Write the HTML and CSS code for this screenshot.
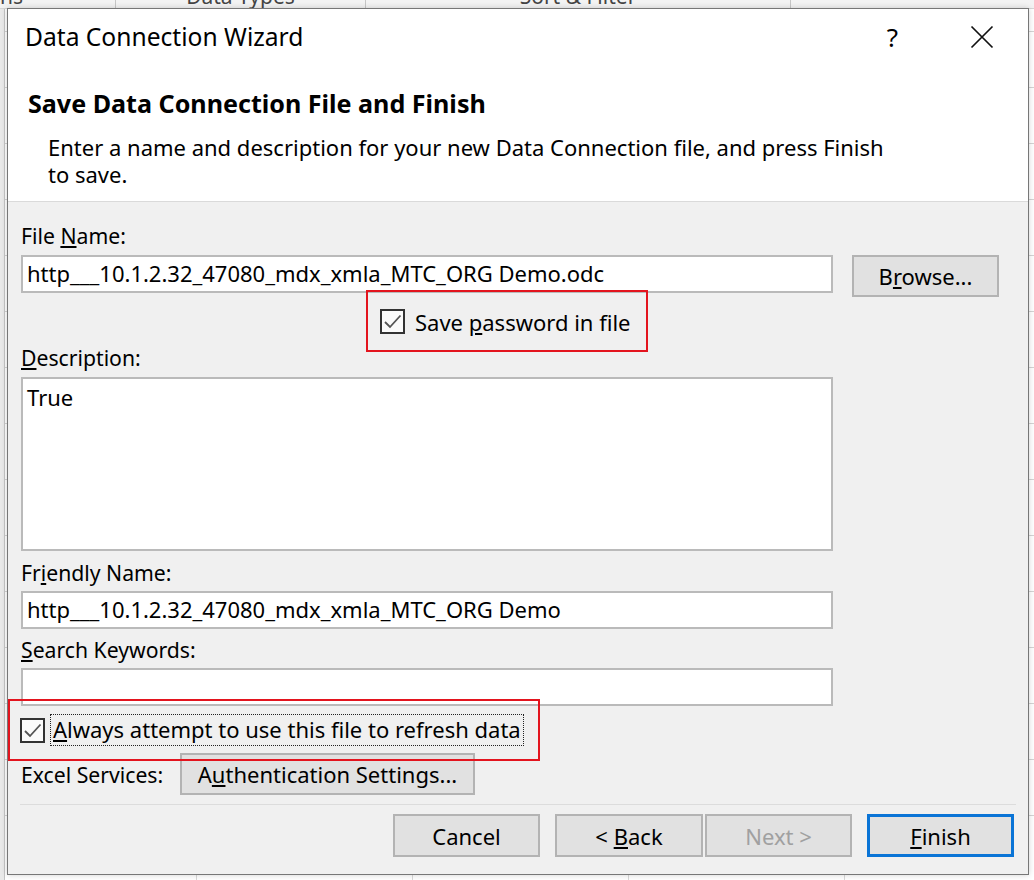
FILE: index.html
```html
<!DOCTYPE html>
<html lang="en">
<head>
<meta charset="utf-8">
<title>Data Connection Wizard</title>
<link rel="stylesheet" href="styles.css">
</head>
<body>
<div class="desk">
  <div class="ribbon">
    <div class="grp g1"><span>ns</span></div>
    <div class="grp g2"><span>Data Types</span></div>
    <div class="grp g3"><span>Sort &amp; Filter</span></div>
    <div class="grp g4"></div>
  </div>
  <div class="sheet"></div>

  <div class="dialog">
    <header class="head">
      <div class="titlebar">
        <span class="title">Data Connection Wizard</span>
        <span class="help">?</span>
        <span class="close">
          <svg width="24" height="24" viewBox="0 0 24 24"><path d="M1.5 1.5 L22.5 22.5 M22.5 1.5 L1.5 22.5" stroke="#111" stroke-width="1.7" fill="none"/></svg>
        </span>
      </div>
      <h1 class="heading">Save Data Connection File and Finish</h1>
      <p class="desc">Enter a name and description for your new Data Connection file, and press Finish<br>to save.</p>
    </header>

    <main class="body">
      <div class="label first">File <u>N</u>ame:</div>
      <div class="filerow">
        <div class="input">http___10.1.2.32_47080_mdx_xmla_MTC_ORG Demo.odc</div>
        <div class="btn browse"><span>B<u>r</u>owse...</span></div>
      </div>

      <div class="check c1">
        <svg class="box" width="25" height="25" viewBox="0 0 25 25"><rect x="1" y="1" width="23" height="23" fill="#fbfbfb" stroke="#333" stroke-width="2"/><path d="M5 13 L10 18 L20.5 6.5" stroke="#555" stroke-width="1.8" fill="none"/></svg>
        <span class="ctext">Save <u>p</u>assword in file</span>
      </div>

      <div class="label l2"><u>D</u>escription:</div>
      <div class="input area">True</div>

      <div class="label l3">Fr<u>i</u>endly Name:</div>
      <div class="input single">http___10.1.2.32_47080_mdx_xmla_MTC_ORG Demo</div>

      <div class="label l4"><u>S</u>earch Keywords:</div>
      <div class="input single"></div>

      <div class="check c2">
        <svg class="box" width="25" height="25" viewBox="0 0 25 25"><rect x="1" y="1" width="23" height="23" fill="#fbfbfb" stroke="#333" stroke-width="2"/><path d="M5 13 L10 18 L20.5 6.5" stroke="#555" stroke-width="1.8" fill="none"/></svg>
        <span class="ctext focus"><u>A</u>lways attempt to use this file to refresh data</span>
      </div>

      <div class="services">
        <span class="slabel">Excel Services:</span>
        <div class="btn auth"><span>A<u>u</u>thentication Settings...</span></div>
      </div>

      <div class="sep"></div>

      <div class="actions">
        <div class="btn act cancel"><span>Cancel</span></div>
        <div class="btn act back"><span>&lt; <u>B</u>ack</span></div>
        <div class="btn act next disabled"><span>Next &gt;</span></div>
        <div class="btn act finish"><span><u>F</u>inish</span></div>
      </div>
    </main>
  </div>

  <div class="mark m1"></div>
  <div class="mark m2"></div>
</div>
</body>
</html>
```

FILE: styles.css
```css
* { box-sizing: border-box; }

html, body {
  margin: 0;
  padding: 0;
}

body {
  width: 1034px;
  height: 880px;
  overflow: hidden;
  font-family: "Noto Sans", "Open Sans", sans-serif;
  color: #000;
}

.desk {
  position: relative;
  width: 1034px;
  height: 880px;
  background: #ffffff;
  overflow: hidden;
}

/* Excel window behind the dialog */
.ribbon {
  display: flex;
  height: 9px;
  background: #f3f3f3;
  border-bottom: 1px solid #d6d6d6;
  overflow: hidden;
}

.grp {
  height: 9px;
  border-right: 1px solid #c6c6c6;
  text-align: center;
  font-size: 21px;
  line-height: 22px;
  color: #444;
}

.grp span {
  display: block;
  margin-top: -15px;
}

.g1 { width: 116px; text-align: left; }
.g2 { width: 250px; }
.g3 { width: 425px; }
.g4 { flex: 1; border-right: none; }

.sheet {
  height: 871px;
  background-color: #ffffff;
  background-image:
    linear-gradient(to right, #e9e9e9 0, #e9e9e9 4px, #c4c4c4 4px, #c4c4c4 5px, transparent 5px),
    repeating-linear-gradient(to right, transparent 0, transparent 215px, #d9d9d9 215px, #d9d9d9 216px),
    repeating-linear-gradient(to bottom, transparent 0, transparent 55px, #d4d4d4 55px, #d4d4d4 56px);
  background-position: 0 0, -19px 0, 0 -33px;
}

/* dialog window */
.dialog {
  position: absolute;
  left: 7px;
  top: 8px;
  width: 1022px;
  height: 867px;
  border: 1px solid #777;
  background: #f0f0f0;
  display: flex;
  flex-direction: column;
  box-shadow: 0 0 6px rgba(0, 0, 0, 0.18);
}

.head {
  height: 193px;
  background: #fff;
  border-bottom: 1px solid #dadada;
  flex: none;
}

.titlebar {
  height: 56px;
  display: flex;
  align-items: center;
  padding-left: 17px;
}

.title {
  flex: 1;
  font-size: 24.6px;
  line-height: 28px;
  white-space: nowrap;
}

.help {
  font-size: 26px;
  line-height: 28px;
  margin-right: 72px;
}

.close {
  display: flex;
  width: 24px;
  height: 24px;
  margin-right: 34px;
}

.heading {
  margin: 22px 0 0 20px;
  font-size: 25.1px;
  line-height: 32px;
  font-weight: 700;
}

.desc {
  margin: 15px 0 0 40px;
  font-size: 22px;
  line-height: 27px;
  white-space: nowrap;
}

.body {
  flex: 1;
  display: flex;
  flex-direction: column;
  padding: 22px 14px 0 13px;
  font-size: 22px;
}

.label {
  height: 24px;
  line-height: 24px;
  white-space: nowrap;
  font-size: 21.2px;
}

.l2 { margin-top: 12px; }
.l3 { margin-top: 10px; }
.l4 { margin-top: 9px; }

.input {
  width: 812px;
  height: 38px;
  background: #fff;
  border: 2px solid #bababa;
  padding: 0 4px;
  line-height: 33px;
  white-space: nowrap;
  overflow: hidden;
}

.single { margin-top: 6px; }

.area {
  margin-top: 7px;
  height: 174px;
  line-height: 24px;
  padding-top: 6px;
}

.filerow {
  display: flex;
  gap: 19px;
  margin-top: 7px;
  height: 42px;
}

.btn {
  display: flex;
  align-items: center;
  justify-content: center;
  background: #e1e1e1;
  border: 2px solid #b3b3b3;
  white-space: nowrap;
}

.browse {
  width: 147px;
  height: 42px;
}

.check {
  display: flex;
  align-items: center;
  white-space: nowrap;
}

.box { flex: none; }

.c1 {
  margin-top: 12px;
  height: 25px;
  padding-left: 359px;
  gap: 10px;
}

.c2 {
  margin-top: 8px;
  height: 32px;
  margin-left: -1px;
  gap: 5px;
}

.focus {
  border: 1px dotted #222;
  height: 32px;
  line-height: 29px;
  padding: 0 2px 0 2px;
}

.services {
  display: flex;
  align-items: center;
  gap: 19px;
  margin-top: 7px;
  height: 42px;
}

.slabel {
  width: 140px;
  white-space: nowrap;
  font-size: 21.2px;
}

.auth {
  width: 295px;
  height: 42px;
}

.sep {
  margin: 9px -2px 0 -1px;
  height: 1px;
  background: #dcdcdc;
}

.actions {
  display: flex;
  justify-content: flex-end;
  margin-top: 9px;
  height: 43px;
}

.act {
  width: 147px;
  height: 43px;
}

.back { width: 148px; margin-left: 15px; }
.next { margin-left: 2px; }
.finish {
  margin-left: 15px;
  border: 2px solid #0a74d6;
  box-shadow: inset 0 0 0 1px #0a74d6;
}

.disabled { color: #a0a0a0; }

/* red annotation boxes drawn over the screenshot */
.mark {
  position: absolute;
  border: 2px solid #e3141e;
}

.m1 { left: 366px; top: 290px; width: 282px; height: 62px; }
.m2 { left: 8px; top: 699px; width: 532px; height: 62px; }
```
